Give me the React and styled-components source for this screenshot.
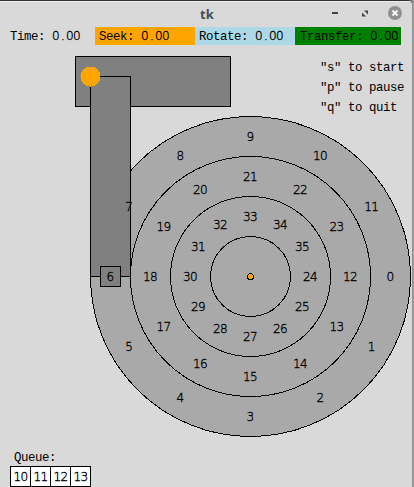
import React from 'react';
import styled, { createGlobalStyle, css } from 'styled-components';

const Global = createGlobalStyle`
  * { box-sizing: border-box; }
  body { margin: 0; background: #d9d9d9; overflow: hidden; }
`;

const digitFont = css`
  font-family: "DejaVu Sans", sans-serif;
  font-weight: 200;
  font-size: 12px;
  letter-spacing: -0.63px;
  -webkit-text-stroke: 0.35px #000;
`;

const Frame = styled.div`
  width: 414px;
  height: 487px;
  padding-right: 2px;
  background: linear-gradient(to right, #858585 412px, #aaa 414px);
`;

const Window = styled.div`
  display: flex;
  flex-direction: column;
  height: 487px;
  overflow: hidden;
  background: #d9d9d9;
  border-top: 1px solid #352f32;
  border-top-right-radius: 4px;
  color: #000;
  font: 12.4px/20px "Liberation Mono", monospace;
  letter-spacing: -0.44px;
  white-space: pre;
`;

const TitleBar = styled.header`
  display: grid;
  grid-template-columns: 1fr auto;
  height: 26px;
  flex: none;
  border-top: 1px solid #eee;
`;

const Title = styled.h1`
  margin: 0;
  padding-left: 200px;
  font: bold 13px/25px "Noto Sans", sans-serif;
  letter-spacing: 0;
  color: #454f5b;
`;

const Controls = styled.svg`
  width: 85px;
  height: 25px;
`;

const Stats = styled.div`
  display: grid;
  grid-template-columns: 95px 100px 100px 106px;
  height: 18px;
  flex: none;
`;

const Stat = styled.div`
  height: 18px;
  padding-left: ${(p) => p.$pad}px;
  line-height: 21px;
  background: ${(p) => p.$color};
`;

const Digits = styled.span`
  ${digitFont}
  line-height: 1;
`;

const Dot = styled.span`
  display: inline-block;
  width: 7px;
  text-align: center;
`;

const Body = styled.main`
  position: relative;
  height: 405px;
  flex: none;
`;

const Drawing = styled.svg`
  display: block;
  width: 412px;
  height: 405px;
  shape-rendering: crispEdges;
  text {
    ${digitFont}
    text-anchor: middle;
    stroke: #000;
    stroke-width: 0.35px;
  }
`;

const Help = styled.div`
  position: absolute;
  left: 320px;
  top: 13px;
  line-height: 20px;
`;

const QueueLabel = styled.div`
  height: 16px;
  flex: none;
  padding-left: 14px;
  line-height: 16px;
`;

const Queue = styled.div`
  display: flex;
  padding-left: 10px;
`;

const Cell = styled.div`
  width: 21px;
  height: 21px;
  margin-right: -1px;
  border: 1px solid #000;
  background: #fff;
  ${digitFont}
  line-height: 20px;
  text-align: center;
`;

const Value = () => (
  <Digits>0<Dot>.</Dot>00</Digits>
);

const CX = 250.5;
const CY = 276.5;
const sectors = Array.from({ length: 36 }, (_, n) => {
  const r = 140 - 40 * Math.floor(n / 12);
  const a = ((n % 12) * Math.PI) / 6;
  return { n, x: CX - 0.5 + r * Math.cos(a), y: CY + r * Math.sin(a) + 4.5 };
});

export default function App() {
  return (
    <Frame>
      <Global />
      <Window>
        <TitleBar>
          <Title>tk</Title>
          <Controls viewBox="327 2 85 25">
            <path d="M332 13h6" stroke="#3f4448" strokeWidth="2" />
            <path d="M364 10.5h4v4zM362 12.5v4h4z" fill="#3f4448" />
            <circle cx="395" cy="13" r="7" fill="#909090" />
            <path d="M392.5 10.5l5 5m0-5l-5 5" stroke="#fff" strokeWidth="1.8" />
          </Controls>
        </TitleBar>
        <Stats>
          <Stat $pad={10}>Time: <Value /></Stat>
          <Stat $pad={4} $color="orange">Seek: <Value /></Stat>
          <Stat $pad={4} $color="lightblue">Rotate: <Value /></Stat>
          <Stat $pad={5} $color="green">Transfer: <Value /></Stat>
        </Stats>
        <Body>
          <Drawing viewBox="0 45 412 405">
            {[160, 120, 80, 40].map((r) => (
              <circle key={r} cx={CX} cy={CY} r={r} fill="#a9a9a9" stroke="#000" />
            ))}
            <circle cx={CX} cy={CY} r="3" fill="orange" stroke="#000" />
            <rect x="75.5" y="56.5" width="155" height="50" fill="gray" stroke="#000" />
            <rect x="90.5" y="76.5" width="40" height="200" fill="gray" stroke="#000" />
            <circle cx="90.5" cy="76.5" r="10" fill="orange" />
            <rect x="100.5" y="266.5" width="20" height="20" fill="gray" stroke="#000" />
            {sectors.map((s) => (
              <text key={s.n} x={s.x} y={s.y}>{s.n}</text>
            ))}
          </Drawing>
          <Help>{'"s" to start\n"p" to pause\n"q" to quit'}</Help>
        </Body>
        <QueueLabel>Queue:</QueueLabel>
        <Queue>
          {[10, 11, 12, 13].map((n) => <Cell key={n}>{n}</Cell>)}
        </Queue>
      </Window>
    </Frame>
  );
}
